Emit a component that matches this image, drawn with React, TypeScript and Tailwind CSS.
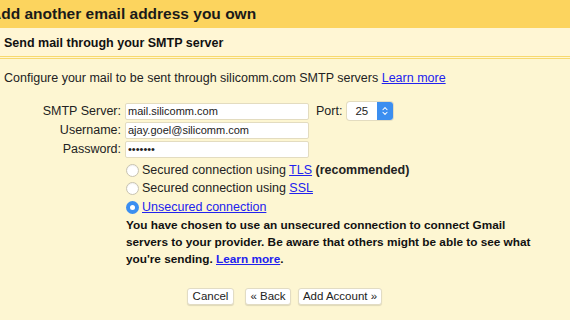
import { ChevronsUpDown } from 'lucide-react'

const font = { fontFamily: '"Liberation Sans", Arial, sans-serif' }

function Field({ label, value, type = 'text' }: { label: string; value: string; type?: string }) {
  return (
    <div className="flex items-center h-[19px]">
      <label className="w-[125px] text-right pr-[4px] text-[12.5px] text-[#222]">{label}</label>
      <input
        readOnly
        type={type}
        value={value}
        className="w-[184px] h-[17px] bg-white border border-[#e3dcc0] rounded-[2px] px-[2px] text-[11px] text-[#222] outline-none"
      />
    </div>
  )
}

function Radio({ checked, children }: { checked?: boolean; children: React.ReactNode }) {
  return (
    <div className="flex items-center gap-[3px] h-[18.5px]">
      {checked ? (
        <span className="w-[13px] h-[13px] rounded-full bg-[#3b8ef0] flex items-center justify-center">
          <span className="w-[5px] h-[5px] rounded-full bg-white" />
        </span>
      ) : (
        <span className="w-[13px] h-[13px] rounded-full bg-white border border-[#c8c3b0] shadow-[inset_0_1px_1px_rgba(0,0,0,0.06)]" />
      )}
      <span className="text-[12.5px] text-[#222]">{children}</span>
    </div>
  )
}

function Btn({ children, className = '' }: { children: React.ReactNode; className?: string }) {
  return (
    <button className={`h-[17px] px-0 whitespace-nowrap bg-white rounded-[3px] border border-[#e2dcc4] shadow-[0_1px_1px_rgba(0,0,0,0.12)] text-[11.5px] text-[#222] leading-none ${className}`}>
      {children}
    </button>
  )
}

export default function App() {
  return (
    <div style={font} className="w-[570px] h-[320px] overflow-hidden bg-[#fdf6d2] text-[#222]">
      {/* title bar */}
      <div className="h-[28px] bg-[#fcd45e] flex items-center overflow-hidden">
        <h1 className="ml-[-10px] text-[15.5px] font-bold text-[#1a1a1a] whitespace-nowrap">Add another email address you own</h1>
      </div>

      {/* sub header */}
      <div className="h-[31px] pt-[2px] bg-[#fff6d4] border-b-[3px] border-double border-[#f7d96f] flex items-center px-[4px]">
        <h2 className="text-[12.5px] font-bold text-[#111]">Send mail through your SMTP server</h2>
      </div>

      <div className="pt-[10px] px-[4px]">
        <p className="text-[12.5px] text-[#222]">
          Configure your mail to be sent through silicomm.com SMTP servers{' '}
          <a className="text-[#2222ee] underline">Learn more</a>
        </p>
      </div>

      {/* form */}
      <div className="mt-[14px] flex flex-col">
        <div className="flex items-center">
          <Field label="SMTP Server:" value="mail.silicomm.com" />
          <span className="ml-[7px] text-[12.5px]">Port:</span>
          <div className="ml-[5px] flex items-center h-[18px] w-[46px] bg-white rounded-[3px] shadow-[0_0_0_1px_#e3dcc0] overflow-hidden">
            <span className="flex-1 pl-[8px] text-[11.5px]">25</span>
            <span className="w-[16px] h-full bg-[#3b8ef0] flex items-center justify-center">
              <ChevronsUpDown className="w-[10px] h-[10px] text-white" strokeWidth={2.5} />
            </span>
          </div>
        </div>
        <Field label="Username:" value="ajay.goel@silicomm.com" />
        <Field label="Password:" value="•••••••" />

        <div className="ml-[126px] mt-[2px] flex flex-col">
          <Radio>
            Secured connection using <a className="text-[#2222ee] underline">TLS</a> <b>(recommended)</b>
          </Radio>
          <Radio>
            Secured connection using <a className="text-[#2222ee] underline">SSL</a>
          </Radio>
          <Radio checked>
            <a className="text-[#2222ee] underline">Unsecured connection</a>
          </Radio>
          <p className="mt-[1px] whitespace-nowrap text-[11.8px] font-bold leading-[17px] text-[#111]">
            You have chosen to use an unsecured connection to connect Gmail
            <br />
            servers to your provider. Be aware that others might be able to see what
            <br />
            you're sending. <a className="text-[#2222ee] underline">Learn more</a>.
          </p>
        </div>

        <div className="mt-[20px] flex items-center pl-[187px]">
          <Btn className="w-[47px]">Cancel</Btn>
          <Btn className="ml-[11px] w-[46px]">« Back</Btn>
          <Btn className="ml-[7px] w-[84px]">Add Account »</Btn>
        </div>
      </div>
    </div>
  )
}
